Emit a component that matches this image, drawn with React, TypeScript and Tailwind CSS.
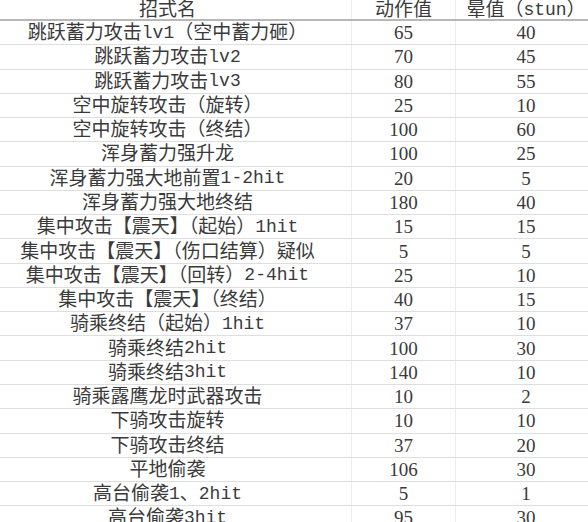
const rows: [string, string, string][] = [
  ["跳跃蓄力攻击lv1（空中蓄力砸）", "65", "40"],
  ["跳跃蓄力攻击lv2", "70", "45"],
  ["跳跃蓄力攻击lv3", "80", "55"],
  ["空中旋转攻击（旋转）", "25", "10"],
  ["空中旋转攻击（终结）", "100", "60"],
  ["浑身蓄力强升龙", "100", "25"],
  ["浑身蓄力强大地前置1-2hit", "20", "5"],
  ["浑身蓄力强大地终结", "180", "40"],
  ["集中攻击【震天】（起始）1hit", "15", "15"],
  ["集中攻击【震天】（伤口结算）疑似", "5", "5"],
  ["集中攻击【震天】（回转）2-4hit", "25", "10"],
  ["集中攻击【震天】（终结）", "40", "15"],
  ["骑乘终结（起始）1hit", "37", "10"],
  ["骑乘终结2hit", "100", "30"],
  ["骑乘终结3hit", "140", "10"],
  ["骑乘露鹰龙时武器攻击", "10", "2"],
  ["下骑攻击旋转", "10", "10"],
  ["下骑攻击终结", "37", "20"],
  ["平地偷袭", "106", "30"],
  ["高台偷袭1、2hit", "5", "1"],
  ["高台偷袭3hit", "95", "30"],
];

const font = { fontFamily: '"Liberation Serif", "Noto Sans CJK SC", serif' };
const mono = { fontFamily: '"Liberation Mono", "Noto Sans CJK SC", monospace' };

// latin runs in the names are half-width like the sheet's font
function Name({ text }: { text: string }) {
  const parts = text.split(/([A-Za-z0-9-]+)/);
  return (
    <>
      {parts.map((p, i) =>
        /^[A-Za-z0-9-]+$/.test(p) ? (
          <span key={i} className="text-[18px]" style={mono}>
            {p}
          </span>
        ) : (
          <span key={i}>{p}</span>
        )
      )}
    </>
  );
}

export default function App() {
  return (
    <div className="w-[588px] h-[522px] overflow-hidden bg-white text-[#3a3a3a] text-[19px] leading-none" style={font}>
      <div className="grid grid-cols-[352px_104px_1fr] h-[21px] border-b-2 border-[#b8b8b8]">
        <div className="flex items-center justify-center pr-4 border-r border-[#ededed]">招式名</div>
        <div className="flex items-center justify-center border-r border-[#ededed]">动作值</div>
        <div className="flex items-center justify-center pl-2 whitespace-nowrap">
          晕值（<Name text="stun" />）
        </div>
      </div>
      {rows.map(([name, act, stun]) => (
        <div key={name} className="grid grid-cols-[352px_104px_1fr] h-[24.27px] border-b border-[#dedede]">
          <div className="flex items-center justify-center pr-4 whitespace-nowrap border-r border-[#ededed]">
            <Name text={name} />
          </div>
          <div className="flex items-center justify-center border-r border-[#ededed]">{act}</div>
          <div className="flex items-center justify-center pl-2">{stun}</div>
        </div>
      ))}
    </div>
  );
}
